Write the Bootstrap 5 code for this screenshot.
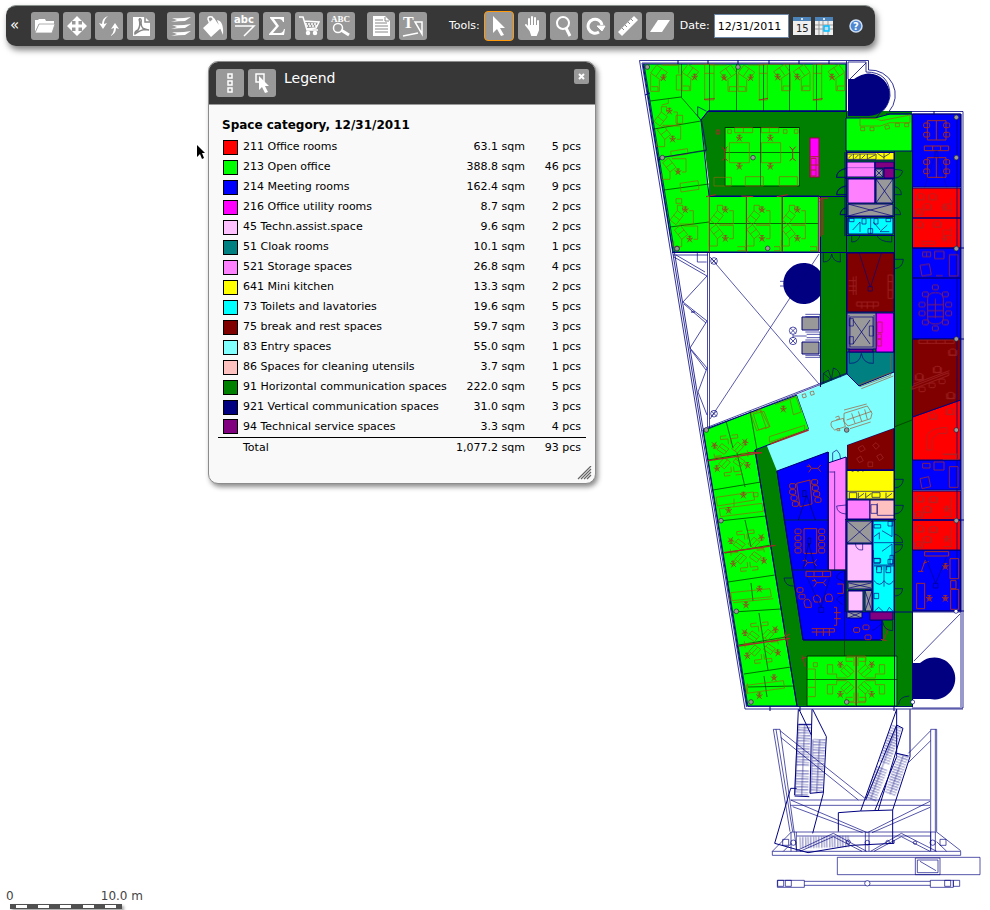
<!DOCTYPE html>
<html lang="en">
<head>
<meta charset="utf-8">
<meta name="viewport" content="width=device-width, initial-scale=1">
<title>Floor plan viewer</title>
<link rel="stylesheet" href="https://cdn.jsdelivr.net/npm/bootstrap@5.3.0/dist/css/bootstrap.min.css">
<style>
body{font-family:"DejaVu Sans",Verdana,sans-serif;font-size:11px;line-height:16px;color:#000;background:#fff}
.toolbar{background:#373737;color:#fff;border-radius:10px;border-top:1px solid #8a938d;box-shadow:2px 4px 6px rgba(0,0,0,.5);height:41px;margin:5px 0 4px 6px;padding:0 12px 0 4px}
.collapse-btn{font-size:15px;width:21px;color:#fff;padding:0 0 2px;border:0;background:none;text-align:left}
.tool{width:28px;height:28px;padding:0;border:0;border-radius:3px;background:#999;color:#fff;display:block;flex:none}
.tool svg{display:block;width:28px;height:28px}
.tool.picked{width:30px;height:30px;border:1px solid #ff9a0c;border-radius:4px}
.tool-group{margin-left:12px}
.tools-label{margin:0 4px 0 22px}
.date-label{margin:0 4px 0 6px}
.date-box{width:75px;height:24px;border:1px solid #6b86a5;padding:0 3px;font-size:11px;background:#fff;color:#000}
.small-btn{padding:0;border:0;background:none;display:block}
.small-btn svg{display:block}
.legend{left:208px;top:61px;width:388px;background:#f9f9f9;border:1px solid #8c8c8c;border-radius:10px;box-shadow:2px 3px 5px rgba(0,0,0,.45);overflow:hidden}
.legend-head{background:#373737;color:#fff;height:43px;padding:7px 6px 0 7px;border-bottom:1px solid #999}
.legend-head h1{font-size:14px;line-height:18px;font-weight:400;margin:0 0 0 4px}
.close-btn{width:15px;height:15px;padding:0;border:0;border-radius:2px;background:#999}
.legend-body{padding:10px 9px 0 9px}
.legend-body h2{font-size:12px;line-height:20px;font-weight:700;margin:0 0 2px 4px}
.legend-table{width:100%;border-collapse:collapse}
.legend-table td,.legend-table th{height:20px;padding:0;font-weight:400;white-space:nowrap;line-height:18px}
.legend-table td{text-align:right}
.legend-table .name-col{width:232px;padding-left:5px}
.legend-table .area-col{width:75px}
.legend-table .count-col{padding-right:5px}
.legend-table tfoot tr{border-top:1px solid #000}
.legend-table tfoot td,.legend-table tfoot th{height:21px}
.legend-table tfoot th{padding-left:25px}
.swatch{display:inline-block;width:15px;height:15px;border:1px solid #000;vertical-align:middle;margin-right:5px}
.grip{padding:8px 3px 3px 0}
.pointer{left:196px;top:144px}
.scale{left:6px;bottom:1px;color:#444;font-size:12px}
.scale-text{width:137px}
.scale-bar{width:112px;height:5px;margin-left:4px;background:#505050;box-shadow:2px 2px 3px rgba(0,0,0,.35);padding:1px 0}
.scale-bar i{width:11px;height:3px;background:#fff}
.plan{width:360px;height:850px;flex:none;display:block}
.wall{stroke:#000080;fill:none;stroke-width:1}
.outer{opacity:.8}
.thin{stroke:#003000;fill:none;stroke-width:1}
.faint{opacity:.7}
.room{stroke:#000080;stroke-width:1}
.f{stroke:#94640c;fill:none;stroke-width:2}
.fr{stroke:#a52a2a;fill:none;stroke-width:3}
.heavy{stroke-width:4}
.n{stroke:#000080;fill:none;stroke-width:2}
.nf{stroke:#000080;fill:none;stroke-width:1}
.frame{stroke:#000080;fill:none;stroke-width:2}
.lg{fill:#0f0}.dg{fill:#008000}.bl{fill:#00f}.rd{fill:#f00}.mg{fill:#f0f}.lp{fill:#ffc0ff}.tl{fill:#008080}.st{fill:#ff80ff}.yl{fill:#ff0}.cy{fill:#0ff}.mr{fill:#800000}.en{fill:#80ffff}.pk{fill:#ffc0c0}.nv{fill:#000080}.pu{fill:#800080}.gr{fill:#999}
</style>
</head>
<body>
<div class="d-flex flex-column vh-100 overflow-hidden position-relative">
<header class="toolbar d-flex align-items-center align-self-start flex-shrink-0" role="toolbar" aria-label="Plan tools">
 <button class="collapse-btn" type="button" aria-label="Collapse toolbar">«</button>
 <div class="d-flex gap-1">
  <button class="tool" type="button" aria-label="Open"><svg viewBox="0 0 28 28" fill="#fff"><path d="M4 20V8h3l1-1h6l1 2h8v3H8z"/><path d="M8 12h16l-3 9H4z" stroke="#999" stroke-width=".8"/></svg></button>
  <button class="tool" type="button" aria-label="Move"><svg viewBox="0 0 28 28" fill="#fff"><path d="M14 4l5 5h-3.500v3.500H19V9l5 5-5 5v-3.500h-3.500V19H19l-5 5-5-5h3.500v-3.500H9V19l-5-5 5-5v3.500h3.500V9H9z"/></svg></button>
  <button class="tool" type="button" aria-label="Refresh"><svg viewBox="0 0 28 28" fill="#fff"><path d="M13 4Q9 7 9 12l3-1-4 6-4-6 3 1q0-6 6-8z"/><path d="M15 24q4-3 4-8l-3 1 4-6 4 6-3-1q0 6-6 8z"/></svg></button>
  <button class="tool" type="button" aria-label="Export PDF"><svg viewBox="0 0 28 28"><path fill="#fff" d="M6 5h12l5 5v14H6z"/><path d="M18 5v5h5M12 7q3-1 2 4 0 7 8 7-6-2-14 4-1-2 3-4 3-5 1-11" fill="none" stroke="#888" stroke-width="1.500"/></svg></button>
 </div>
 <div class="d-flex gap-1 tool-group">
  <button class="tool" type="button" aria-label="Layers"><svg viewBox="0 0 28 28" fill="#fff"><path d="M5 6q8 1 19-1-3 2-6 4-6 0-14 1 4-1 6-2-3-1-5-2zM5 13q8 1 19-1-3 2-6 4-6 0-14 1 4-1 6-2-3-1-5-2zM5 20q8 1 19-1-3 2-6 4-6 0-14 1 4-1 6-2-3-1-5-2z"/></svg></button>
  <button class="tool" type="button" aria-label="Fill"><svg viewBox="0 0 28 28"><path fill="#fff" d="M4 16L15 6l7 10-10 9zM18 8q7 1 6 15l-3-7z"/><path d="M11 12L9 7q0-3 4-2l3 4" fill="none" stroke="#fff" stroke-width="1.500"/></svg></button>
  <button class="tool" type="button" aria-label="Text labels"><svg viewBox="0 0 28 28" fill="#fff"><text x="3" y="11" font-size="10" font-weight="700">abc</text><path d="M4 14h19L13 24" fill="none" stroke="#fff" stroke-width="1.500"/></svg></button>
  <button class="tool" type="button" aria-label="Sum"><svg viewBox="0 0 28 28" fill="#fff"><path d="M7 5h14v5h-1q-1-3-4-3h-5l5 7-6 7h7q3 0 4-4h1l-1 6H6v-1l7-8-6-8z"/></svg></button>
  <button class="tool" type="button" aria-label="Cart"><svg viewBox="0 0 28 28" fill="none" stroke="#fff" stroke-width="1.500"><path d="M4 5h4l4 13h11M9 9l15 1-3 6-10 1"/><path d="M10 12h12M11 14h11" stroke-dasharray="2 1"/><circle cx="13" cy="21" r="1.500" fill="#fff"/><circle cx="20" cy="21" r="1.500" fill="#fff"/></svg></button>
  <button class="tool" type="button" aria-label="Find text"><svg viewBox="0 0 28 28" fill="#fff"><text x="4" y="10" font-size="9" font-weight="700" font-family="Liberation Serif,serif">ABC</text><circle cx="11" cy="16" r="4.500" fill="none" stroke="#fff" stroke-width="1.500"/><path d="M14 18l8 5" stroke="#fff" stroke-width="3"/></svg></button>
 </div>
 <div class="d-flex gap-1 tool-group">
  <button class="tool" type="button" aria-label="Report"><svg viewBox="0 0 28 28"><path fill="#fff" d="M6 4h12l5 5v15H6z"/><path d="M8 8h8M8 11h12M8 14h13M8 17h13M8 20h13M18 5v4h4" stroke="#888" fill="none"/></svg></button>
  <button class="tool" type="button" aria-label="Text style"><svg viewBox="0 0 28 28" fill="#fff"><text x="4" y="16" font-size="16" font-weight="700" font-family="Liberation Serif,serif">T</text><path d="M16 10h7v12zM4 24l15-3" fill="none" stroke="#fff" stroke-width="1.500"/></svg></button>
 </div>
 <span class="tools-label">Tools:</span>
 <div class="d-flex gap-1 align-items-center">
  <button class="tool picked" type="button" aria-label="Select"><svg viewBox="0 0 28 28" fill="#fff"><path d="M8 4l12 12h-5l4 7-3 1-4-7-4 4z"/></svg></button>
  <button class="tool" type="button" aria-label="Pan"><svg viewBox="0 0 28 28" fill="none" stroke="#fff" stroke-width="2" stroke-linecap="round"><path d="M11 15V7M14 15V5M17 15V6M20 15V9M8 13l4 5"/><path d="M11 14h9v4l-2 5h-4z" fill="#fff"/></svg></button>
  <button class="tool" type="button" aria-label="Zoom"><svg viewBox="0 0 28 28" fill="none" stroke="#fff"><circle cx="13" cy="11" r="6" stroke-width="2"/><path d="M16 16l4 8" stroke-width="3"/></svg></button>
  <button class="tool" type="button" aria-label="Rotate"><svg viewBox="0 0 28 28" fill="none" stroke="#fff" stroke-width="3"><path d="M17 20a7 7 0 1 1 3-7"/><path d="M15 14h8l-3 5z" fill="#fff" stroke-width="1"/></svg></button>
  <button class="tool" type="button" aria-label="Measure"><svg viewBox="0 0 28 28"><path d="M4 20L20 4l4 4L8 24z" fill="#fff"/><path d="M8 16l2 2M11 13l2 2M14 10l2 2M17 7l2 2" stroke="#888"/></svg></button>
  <button class="tool" type="button" aria-label="Area"><svg viewBox="0 0 28 28" fill="#fff"><path d="M12 8h12l-8 12H4z"/></svg></button>
 </div>
 <label class="date-label" for="date">Date:</label>
 <input class="date-box" id="date" type="text" value="12/31/2011">
 <div class="d-flex gap-1 ms-1">
  <button class="small-btn" type="button" aria-label="Pick date"><svg width="18" height="18" viewBox="0 0 18 18"><path d="M0 0h18v18H0z" fill="#eee"/><path d="M0 0h18v4H0z" fill="#4c83b8"/><circle cx="9" cy="2" r="1" fill="#fff"/><text x="3" y="15" font-size="10" fill="#222">15</text></svg></button>
  <button class="small-btn" type="button" aria-label="Calendar"><svg width="18" height="18" viewBox="0 0 18 18"><path d="M0 0h18v18H0z" fill="#eee"/><path d="M0 8h18M0 12h18M4 4v14M8 4v14M13 4v14" stroke="#999"/><path d="M0 0h18v4H0z" fill="#4c83b8"/><circle cx="9" cy="2" r="1" fill="#fff"/><path d="M9 9h5v5H9z" fill="#bdf" stroke="#00bfff" stroke-width="1.500"/></svg></button>
 </div>
 <button class="small-btn ms-3" type="button" aria-label="Help"><svg width="14" height="14" viewBox="0 0 14 14"><circle cx="7" cy="7" r="6" fill="#4e86cf" stroke="#cfe0f5" stroke-width="1.500"/><text x="4" y="11" font-size="10" font-weight="700" fill="#fff">?</text></svg></button>
</header>

<main class="d-flex justify-content-end flex-grow-1">
<svg class="plan" viewBox="630 50 360 850" role="img" aria-label="Floor plan">
<defs>
 <g id="ch"><circle r="5"/><path d="M0-11V0L10-4M0 0L7 9M0 0L-7 9M0 0L-10-4M-6-9L6-9" stroke="#a52a2a"/></g>
 <g id="ws"><path d="M-8-27L24-5 6 19-26-3ZM7-17L-10 7M-26 0V52H0V18M-24 38H-4V50M4-27H54"/><use href="#ch" x="12" y="12"/></g>
 <g id="wd"><path d="M-22 10L0-18 18-4-4 24ZM-11-4L7 10M0-18V-34H16V-18M6 22H48V-18H36"/><use href="#ch" x="24" y="-20"/></g>
 <g id="wu"><path d="M-22-10L0 18 18 4-4-24ZM-11 4L7-10M0 18V40H-24V22M6-22H48V18H36"/><use href="#ch" x="24" y="18"/></g>
 <g id="qt"><path d="M6 24L24 6 46 26 28 44ZM15 15L37 35M28 4H58V16H86V44H70V20M6 40V66H30V54H10"/><use href="#ch" x="47" y="46"/></g>
 <g id="quad"><use href="#qt"/><use href="#qt" transform="scale(-1 1)"/><use href="#qt" transform="scale(1 -1)"/><use href="#qt" transform="scale(-1 -1)"/></g>
 <g id="qs"><path d="M4 20L20 5 40 22 24 38ZM12 12L32 30M28 2H50V10M4 34V50H26V60H8"/><use href="#ch" x="46" y="36"/></g>
 <g id="quads"><use href="#qs"/><use href="#qs" transform="scale(-1 1)"/><use href="#qs" transform="scale(1 -1)"/><use href="#qs" transform="scale(-1 -1)"/></g>
 <g id="post"><circle r="7" fill="#999" stroke="#223" stroke-width="2"/></g>
 <g id="arm"><rect x="-9" y="-9" width="18" height="18" rx="5"/><path d="M-12-6V10H12V-6"/></g>
 <g id="seat"><rect x="-9" y="-7" width="18" height="14" rx="4"/></g>
 <g id="pl"><path d="M-14-12L-6 0H14L22-10M-6 0L-14 12M14 0L22 10M-20-6H-8"/></g>
</defs>

<!-- room fills -->
<path class="dg" d="M708 111H912V707H797L755 450 768 445 820 385V196H709V183L701 120Z"/>
<path class="lg wall" d="M643 64H846V111H708L701 120 709 196H819V252H673Z"/>
<path class="lg thin" d="M725 127.500H799.500V186H725Z"/>
<rect class="mg" x="810" y="138" width="9" height="39" stroke="#a00040"/>
<path class="lg wall" d="M703 430L797 395 809 429 755 450 797 706H747Z"/>
<path class="lg thin" d="M807 656H897V706H807Z"/>
<path class="lg wall" d="M846 118H875L890 114H912V151H846Z"/>
<g class="room">
 <path class="bl" d="M912.500 114H960.500V187H912.500ZM912.500 248H960.500V278H912.500ZM912.500 278H960.500V339H912.500ZM912.500 460H960.500V490H912.500ZM912.500 550H960.500V611H912.500Z"/>
 <path class="rd" d="M912.500 188H960.500V218H912.500ZM912.500 218H960.500V248H912.500ZM912.500 417L960.500 400V460H912.500ZM912.500 491H960.500V520H912.500ZM912.500 520H960.500V550H912.500Z"/>
 <path class="mr" d="M912.500 339H960.500V400L912.500 417ZM847 253H894V312H847ZM847 445L894 428V470H847Z"/>
 <path class="en" stroke="none" d="M797 395L847 374 859 386 894 372V428L847 445V457L828 463V452L777 471 767 446 809 429Z"/>
 <path class="tl" d="M847 352H894V372L859 386 847 374Z"/>
 <path class="bl" d="M777 471L828 452V570H846V612H870V620H882V640H803L792 570Z"/>
 <path class="st" d="M828 463L846 457V570H828ZM847 162H875V177H847ZM848 179H875V203H848ZM847 500H870V519H847Z"/>
 <path class="yl" d="M847 152.500H894V160H847ZM847 470H894V499H847Z"/>
 <path class="pk" d="M870 500H894V519H870Z"/>
 <path class="cy" d="M848 218H893V234H848ZM873 521H894V612H873Z"/>
 <path class="lp" d="M847 544H872V581H847ZM848 591H863V611H848Z"/>
 <path class="pu" d="M875 162H894V168H875ZM884 168H894V178H884ZM870 612H893V620H870ZM849 349H873V352H849Z"/>
 <path class="mg" d="M876 313H893.500V352H876Z"/>
 <path class="gr" d="M876 179H893V203H876ZM848 204H893V216H848ZM875 169H883V177H875ZM847 313H876V349H847ZM802 317H819V330H802ZM802 342H819V354H802ZM847 521H872V543H847ZM848 582H872V589H848ZM865 590H872V611H865ZM847 612H862V618H847Z"/>
</g>
<path class="nv" d="M848 79H854C862 74 866 73.500 869 73.500A21 21 0 0 1 868 116H848ZM820 271V296A20.500 20.500 0 1 1 820 271ZM912 663H920A21 21 0 1 1 930 699H912Z"/>

<!-- outer walls -->
<g class="wall outer">
 <path d="M639.500 60.500H868.500V70A25 25 0 0 1 889 111.500H963V708H912M639.500 60.500L745 709H963M644 64L748 706.500H912M642 63L746.500 707M642 63H847M846.500 61V118M848 79V62H866V72Q890 72 890 96 888 108 880 113L876 118M850 79L866 63M886 114H961V612H912M957 114V611M961 114V707"/>
</g>
<g class="wall">
 <path d="M672 252.500H820"/><path class="faint" d="M673 255H708M707.500 253V427M709.500 253V427M703 431L847 374M703 429L847 373"/>
 <path d="M820.500 196V387M846.500 150V374M894.500 151V707M912.500 151V707M709 196.500H847M708 111.500H846M820 252.500H894M847 470.500H894M828.500 452V570M797 706L755 450M777 471L803 640M803 640H882V620M844.500 570V640"/>
 <path d="M845 178.500H895M845 216.500H895M846 235.500H895M845 152V236M845 519.500H896M846 520V612M872.500 520V612M875 162V203M847 500V520M894 612H912M848 590.500H872"/>
 <path class="faint" d="M674 257L707 276 683 302 707 321 690 348 707 368 698 392 707 415M676 255L705 272M684 304L706 323M691 350L706 370"/>
 <path d="M710 257L819 384M819 254L710 419" opacity=".65"/>
 <path d="M914 661L960 614" opacity=".7"/>
 <path class="faint" d="M876 179L893 203M893 179L876 203M848 204L893 216M893 204L848 216M875 169L883 177M883 169L875 177M847 521L872 543M872 521L847 543M849 583L871 588M871 583L849 588M865 591L872 611M872 591L865 611M848 612L862 618M862 612L848 618M850 317H873V347H850ZM853 320L870 344M870 320L853 344M849 315V349M874 315V349"/>
 <path d="M645 95L650 93M664 158L658 160M691 312H695M912 248H964M912 339H964M912 520H964M912 611H964M678 60V64M708 60V64M738 60V64M769 60V64M799 60V64M829 60V64M934 111V115M800 706V711M770 706V711M894 706V711"/>
</g>
<g class="thin faint">
 <path d="M681.500 64V97M709.500 64V111M736.500 64V111M763.500 64V111M789.500 64V111M816.500 64V111M650 101L681 97 701 120M654 129L701 121M659 158L706 150M664 190L709 184M670 227L709 222M746.500 196V252M782.500 196V252M709 223.500H819M760.500 128V186M725 152.500H799"/>
 <path d="M726 421L733 448M750 411L757 450M708 460L755 452M713 490L761 482M719 521L766 516M725 553L771 545M728 582L775 575M733 612L781 609M739 645L786 637M744 674L791 667M748 687L794 686M737 453L745 487M745 520L751 547M751 583L753 601M759 613L768 670M764 676L767 697M807 679.500H897M856.500 656V706M844.500 640V656M783 520H828M792 570H846M894 427L912 420"/>
</g>

<!-- furniture, north wing -->
<svg x="630" y="50" width="220" height="210" viewBox="0 0 660 630" overflow="visible">
 <g class="f">
  <use href="#ws" x="88" y="72"/><use href="#ws" x="182" y="70"/><use href="#ws" x="350" y="72"/>
  <use href="#ws" transform="matrix(-1 0 0 1 294 72)"/><use href="#ws" transform="matrix(-1 0 0 1 455 70)"/><use href="#ws" transform="matrix(-1 0 0 1 514 70)"/><use href="#ws" transform="matrix(-1 0 0 1 618 70)"/>
  <use href="#wd" x="94" y="204"/><use href="#wu" x="104" y="250"/><use href="#wu" x="120" y="348"/><use href="#wd" x="142" y="500"/><use href="#wu" x="155" y="550"/>
  <path d="M224 43H252V150H224ZM388 43H412V150H388ZM550 43H575V150H550ZM139 75H154V120H139ZM98 45H146V70M224 70H252M388 70H412M550 70H575M138 196H158V220H138ZM122 304L172 296 174 312 124 320ZM150 400L204 392 207 418 153 426ZM252 382H304V408H252ZM346 380H400V408H346ZM448 380H502V408H448ZM138 446H155V460H138ZM314 233H368V248H314ZM394 233H446V248H394ZM340 233V248M418 233V248M95 165L115 160V147"/>
  <path d="M298 278H358V338H298ZM394 278H452V338H394ZM293 239h11v11h-11zM460 239h11v11h-11zM493 239h11v11h-11z"/>
  <use href="#ch" x="328" y="265"/><use href="#ch" x="421" y="265"/><use href="#ch" x="328" y="350"/><use href="#ch" x="421" y="350"/>
  <use href="#wd" x="262" y="500"/><use href="#wd" x="372" y="500"/><use href="#wd" x="478" y="500"/>
  <use href="#wu" x="262" y="548"/><use href="#wu" x="372" y="548"/><use href="#wu" x="478" y="548"/>
  <path d="M322 590H346V602H322M432 590H450V602H432M540 590H560V602H540"/>
 </g>
 <g class="fr"><path d="M222 148L254 146M386 150L414 145M548 150L578 146M238 440V607M349 440V607M456 440V607M228 440L258 434M334 438L370 440M440 440L474 434M565 440V607M572 446V560M565 445H594M569 455L578 445V555M259 240h10v12h-10zM275 290L284 300H290M284 300V325L275 332M292 290L284 300M284 325L293 332M479 290L488 300 497 290M488 300V325L479 332M488 325L497 332"/><path d="M541 320H568M541 345H568M543 325H558V378H543ZM543 360H558"/></g>
 <g class="n"><path d="M212 212L236 182H650M215 212L230 302M84 324L228 302M212 210L203 198V170L230 184M648 355Q620 360 619 382H648M648 408Q620 415 620 434H648M648 474Q632 478 631 494H648"/></g>
 <use href="#post" x="52" y="51"/><use href="#post" x="324" y="51"/><use href="#post" x="97" y="323"/><use href="#post" x="141" y="595"/><use href="#post" x="413" y="595"/><use href="#post" x="369" y="323" />
</svg>

<!-- furniture and doors, upper core -->
<svg x="800" y="50" width="180" height="210" viewBox="0 0 540 630" overflow="visible">
 <g class="f"><path d="M180 206H228L244 212 330 195V218H270L240 228H180ZM182 232h12v10h-12zM210 232h12v10h-12zM254 228l12-3 3 10-12 3zM286 220h12v10h-12zM314 220h12v10h-12z"/></g>
 <g class="fr"><path d="M382 212H438V270H382ZM409 212V270M382 323H438V382H382ZM409 323V382M373 288H446V302H373ZM398 288V302M422 288V302"/>
 <use href="#seat" x="380" y="226"/><use href="#seat" x="380" y="254"/><use href="#seat" x="440" y="226"/><use href="#seat" x="440" y="254"/><use href="#seat" x="380" y="336"/><use href="#seat" x="380" y="364"/><use href="#seat" x="440" y="336"/><use href="#seat" x="440" y="364"/>
 <g opacity=".65"><use href="#arm" x="362" y="440"/><use href="#arm" x="398" y="440"/><use href="#arm" x="382" y="470"/><use href="#arm" x="356" y="486"/><use href="#arm" x="358" y="524"/><use href="#arm" x="412" y="522"/><path d="M454 445V490M454 462H430V480H454M454 530V580M454 540H430V556H454M366 574H404V584H366Z"/><use href="#ch" x="434" y="474"/><use href="#ch" x="434" y="568"/></g></g>
 <g class="n"><path d="M140 312H228V328H140ZM160 312V328M180 312V328M202 312V328M145 325L155 315M165 325L175 315M185 325L195 315M205 325L225 315M232 310L250 322 270 310M252 310V328M137 356Q110 362 110 382H137M137 408Q110 412 110 434H137M137 474Q122 476 120 494H137M284 358Q308 360 308 364Q302 384 284 384M284 410Q304 414 304 434H284M284 472Q300 476 302 494H284M155 556V576Q175 576 180 556M275 556V576Q240 576 230 556M145 503V552M212 503V552M158 540L180 516V546M240 540L220 516M268 545H240L262 525M148 505h14v10h-14zM258 505h14v10h-14zM186 506h12v16h-12zM222 506h12v16h-12zM204 536h14v14h-14z"/></g>
 <path class="nf" d="M409 303L374 412M409 303L440 412M404 303H414V320H404ZM140 353H225"/>
 <use href="#post" x="469" y="202"/><use href="#post" x="469" y="323"/><use href="#post" x="469" y="595"/>
</svg>

<!-- middle section -->
<svg x="660" y="240" width="320" height="220" viewBox="0 0 960 660" overflow="visible">
 <g class="fr" opacity=".75"><path d="M788 36h24v14h-24zM824 34h28v22h-28zM868 44h26v64h-26zM780 76l28-4 6 32-28 4zM800 50V38M828 107H848M803 176Q803 158 826 158 850 158 850 176V234Q850 252 826 252 803 252 803 234ZM803 194H850M803 212H850M803 230H850M826 176V234"/>
 <use href="#seat" x="826" y="142"/><use href="#seat" x="796" y="163"/><use href="#seat" x="856" y="163"/><use href="#seat" x="786" y="194"/><use href="#seat" x="866" y="194"/><use href="#seat" x="786" y="220"/><use href="#seat" x="866" y="220"/><use href="#seat" x="796" y="247"/><use href="#seat" x="856" y="247"/><use href="#seat" x="826" y="265"/>
 <path d="M776 300H882V310H776ZM802 300V310M828 300V310M855 300V310M756 440L866 398V406L756 448ZM760 432L868 392"/><use href="#arm" x="778" y="410"/><use href="#arm" x="832" y="388"/><use href="#arm" x="878" y="336"/><use href="#arm" x="872" y="466"/><use href="#seat" x="786" y="448"/><use href="#seat" x="816" y="436"/><use href="#seat" x="846" y="424"/><use href="#arm" x="818" y="528"/><use href="#arm" x="870" y="514"/>
 <path d="M800 630V590Q806 564 860 562V580H836L816 596V630ZM848 642H896V658H848M580 110V165M588 108V165M566 122H588M566 138H588M566 152H588M590 186H655V198H590ZM605 186V206M622 186V206M640 186V206M684 105H698V175H684ZM684 125H698M684 150H698M652 246h14v32h-14zM652 282h12v14h-12zM652 298h12v20h-12z"/></g>
 <g class="f"><path stroke="#a0522d" d="M552 520L622 498 636 520 632 536 564 558 552 545ZM560 540L635 514M552 510L620 492M570 566L632 546M575 520L585 550M595 514L605 544M614 508L622 538M526 532l10-4 3 8-10 3M515 545L550 535 556 560 524 570Q508 558 515 545M530 566l8 0 2 6-10 0M426 464l10-3 3 10-10 3zM450 456l10-3 3 10-10 3zM596 434L692 398V406L600 440M604 446L700 408M692 342V390"/>
 <path d="M272 520L300 510 318 562 290 572ZM288 516L300 505 328 560 316 566M345 494L408 470 424 516 400 524 390 478M328 590L434 556V572L328 606Z"/><use href="#ch" x="370" y="508"/></g>
 <path class="fr heavy" d="M330 612L446 570M264 638H306"/>
 <g class="n"><path d="M112 38V66H140M490 40V66Q512 66 515 42M541 66V40M515 42Q520 66 541 66M704 58H730Q728 84 704 86M568 336V370Q600 372 604 340 610 372 640 370V336M490 430V400L515 420 505 390 490 400M541 412Q540 390 520 384L515 415M598 40L630 140M664 40L632 140M624 140h13v13h-13zM436 223H480V230H436M436 346H480V352H436M436 276H480V300H436M400 288H440M440 283H480M440 293H480M568 236h12v22h-12zM568 290h12v22h-12zM628 258h12v30h-12zM360 124H372M360 138H372"/><circle cx="399" cy="272" r="11"/><circle cx="399" cy="303" r="11"/><path d="M391 264l16 16M407 264l-16 16M391 295l16 16M407 295l-16 16M399 283V293"/><circle cx="162" cy="63" r="10"/><path d="M154 55l16 16M170 55l-16 16"/><circle cx="162" cy="521" r="10"/><path d="M154 513l16 16M170 513l-16 16"/></g>
 <use href="#post" x="139" y="570"/><use href="#post" x="560" y="570"/><use href="#post" x="889" y="26"/><use href="#post" x="889" y="297"/><use href="#post" x="889" y="570"/><use href="#post" x="51" y="26"/>
</svg>

<!-- lower west offices and core -->
<svg x="690" y="400" width="290" height="170" viewBox="0 0 870 510" overflow="visible">
 <g class="f">
  <use href="#quads" transform="translate(123 166) rotate(-6)"/>
  <use href="#quads" transform="translate(172 452) rotate(-6)"/>
  <use href="#quads" transform="translate(214 728) rotate(-6)"/>
  <path d="M78 292L190 276 194 300 82 318ZM88 326L216 310 220 334 92 350ZM190 278h14v12h-14zM132 296V320M190 42L222 34 240 80 206 90ZM122 578L240 566 244 590 126 602ZM130 608L250 596M120 602V580M168 856L280 842 284 864 170 880ZM172 850V880"/>
  <use href="#ch" x="160" y="286"/><use href="#ch" x="116" y="332"/><use href="#ch" x="208" y="568"/><use href="#ch" x="168" y="616"/><use href="#ch" x="252" y="834"/><use href="#ch" x="208" y="888"/>
  <path d="M504 144l14-8 8 12-14 8zM548 136l10-8 10 10-10 10zM560 168l12-6 8 12-12 8zM500 176l12-8 8 14-12 6zM534 186h14v14h-14z" stroke="#a52a2a"/>
 </g>
 <path class="fr heavy" d="M55 182L216 158M102 458L256 436M146 738L300 715"/>
 <g class="fr">
  <path d="M320 250L360 240 366 312 330 320ZM342 386H380V460H342Z"/>
  <use href="#seat" x="308" y="258"/><use href="#seat" x="308" y="276"/><use href="#seat" x="312" y="294"/><use href="#seat" x="316" y="312"/><use href="#seat" x="374" y="246"/><use href="#seat" x="376" y="264"/><use href="#seat" x="380" y="282"/><use href="#seat" x="384" y="300"/>
  <use href="#seat" x="324" y="394"/><use href="#seat" x="324" y="414"/><use href="#seat" x="324" y="434"/><use href="#seat" x="324" y="452"/><use href="#seat" x="395" y="394"/><use href="#seat" x="395" y="414"/><use href="#seat" x="395" y="434"/><use href="#seat" x="395" y="452"/>
  <use href="#pl" x="370" y="205"/><use href="#pl" x="358" y="488"/>
  <g opacity=".8"><path d="M698 190h22v14h-22zM732 186h30v24h-30zM778 200h26v62h-26zM690 236l26-6 6 30-26 6zM760 164h40v12"/><use href="#arm" x="690" y="296"/><use href="#arm" x="730" y="298"/><use href="#arm" x="712" y="328"/><use href="#arm" x="686" y="344"/><use href="#arm" x="690" y="386"/><use href="#arm" x="730" y="388"/><use href="#arm" x="712" y="418"/><use href="#arm" x="686" y="434"/><use href="#ch" x="770" y="328"/><use href="#ch" x="770" y="418"/><path d="M784 290V350H760M784 380V440H760"/></g>
 </g>
 <g class="n"><path d="M428 184V158L440 150Q452 160 452 178M468 315Q440 318 440 318 440 340 468 342M614 238H640Q638 262 614 264M614 316H640Q638 340 614 342M614 402Q638 410 638 428H614M614 434H638Q636 454 614 458M470 274H612M478 278h22v18h-22zM505 278V296M527 278V296M546 278h24v14h-24zM588 278V296M506 292L522 280M528 292L544 280M590 292L606 280M480 210l8 4 8-4 8 4 8-4 8 4M543 314h18v26h-18zM562 310V346H612M434 214V510M418 216H434M496 430Q498 452 518 450V430M552 428H612M552 495H612M552 374h20v10h-20zM552 410l16-12 0 20M576 392L606 410V364M594 364h14v14h-14zM576 454L606 432V476M552 476h20v12h-20zM594 478h14v14h-14zM560 500V510M575 500V510M590 500V510"/><path d="M350 286L325 360M350 286L376 360M338 272h10v18h-10zM356 430L340 506M356 430L376 506M354 414h8v18h-8z" stroke="#000050"/></g>
 <use href="#post" x="93" y="362"/><use href="#post" x="799" y="362"/>
</svg>

<!-- lower end of the building -->
<svg x="690" y="550" width="290" height="170" viewBox="0 0 870 510" overflow="visible">
 <g class="fr"><use href="#pl" x="386" y="98"/><path d="M348 64H422V80H348ZM372 64V80M398 64V80M442 102H460V130H442M432 172H440V226H432M432 188H452M432 206H452M365 236H433V246H365M380 236V258M400 236V258M418 236V258M342 158q0-12 14-10 10 8 8 24h-18zM370 146q0-12 14-10 10 8 8 20h-18zM406 140q4-12 18-6 6 8 2 20h-18z"/><use href="#seat" x="330" y="120"/><use href="#seat" x="336" y="140"/><use href="#seat" x="500" y="240"/><use href="#seat" x="528" y="232"/><use href="#seat" x="534" y="262"/>
 <path d="M706 30L694 64M684 64H700M700 40L716 34M780 26H806V86H780ZM782 92H798V116H782ZM680 100H704V176H680ZM782 118H806V178H782ZM704 5H776V18H704Z"/><use href="#ch" x="766" y="50"/><use href="#ch" x="718" y="146"/><use href="#ch" x="766" y="146"/><path d="M285 244L294 290M280 262L300 252M336 316L346 350M334 326L350 322M586 230L594 240 580 270M572 268L590 272"/></g>
 <g class="f"><use href="#quad" transform="translate(498 388)"/><path d="M352 357H376V440M352 440H376M352 412H376M370 338h12v12h-12zM470 318H526V345M470 458H526V430"/></g>
 <path class="fr heavy" d="M498 318V466"/>
 <g class="n"><path d="M308 84H282Q286 110 312 108M460 65Q440 70 440 84L460 94M460 136Q440 140 440 150L458 164M614 116H638Q636 138 614 138M546 240Q550 244 576 220M608 212V242Q582 242 578 214M626 464Q626 440 658 438M386 172h15v15h-15zM393 172L350 80M393 172L420 80M737 100L706 20M737 100L770 20M730 100h14v14h-14zM552 48H612M560 50h14v18h-14zM588 50h14v18h-14zM582 50V110M552 92Q570 114 582 92 598 114 610 92M552 130h14v16h-14zM552 185L566 172 580 185M590 185L598 172 610 185M550 0V25H570V40H552M600 16h10v26h-10z"/></g>
 <use href="#post" x="139" y="184"/><use href="#post" x="183" y="456"/><use href="#post" x="470" y="456"/><g fill="#fff" stroke="#000080" stroke-width="2"><circle cx="798" cy="184" r="6"/><circle cx="668" cy="456" r="6"/></g>
</svg>

<!-- stairs and supporting frame -->
<svg x="750" y="700" width="240" height="200" viewBox="0 0 720 600" overflow="visible">
 <g class="frame">
  <path stroke-width="3" d="M145 28L134 285M186 28L180 280M188 28L229 110 220 280 188 400M147 28L184 105M440 28L332 333M480 28V170L428 330M440 28V170M145 73H185M347 300L440 75 459 85 385 330M375 330L440 170M440 160L476 168M332 333L428 330V430M332 333L265 338V395M134 288L178 290M180 280L220 276"/>
  <path d="M70 88H90L140 450M70 88L120 395M78 88L128 395M90 92L345 295M92 112L325 300M542 88H560V395M542 88V452M556 88V395M542 92L475 160M542 122L475 188M122 300H540M122 316H540M122 300L352 398 540 304M128 320L338 398M540 322L366 398"/>
  <path stroke-width="3" d="M122 265H140M122 265L74 430 174 458 306 436 432 430V420"/>
  <path d="M67 454H632V466H67ZM67 454L124 396H560L632 452M140 408H542M123 396V454M139 396V454M346 396V454M357 396V454M542 396V454M556 396V454M140 452L250 400 350 454M150 454L250 410 336 454M362 454L454 400 560 454M372 454L454 410 540 454M100 454L124 430M590 454L560 425M98 418h18v18h-18zM570 418h18v18h-18z"/>
  <circle cx="130" cy="428" r="8"/><circle cx="352" cy="428" r="7"/><circle cx="548" cy="428" r="8"/><circle cx="295" cy="426" r="6"/><circle cx="413" cy="426" r="5"/><circle cx="495" cy="428" r="5"/>
  <path d="M262 472H690V524H262ZM496 474H570V524H496ZM502 480H564V518H502ZM510 484L558 512M82 541H163V562H82ZM83 541H101V559H83ZM106 541H124V559H106ZM163 544H541M163 556H541M541 541H610V562H541ZM584 541H602V559H584ZM610 541H629V559H610Z"/><circle cx="352" cy="550" r="8" fill="#fff"/>
 </g>
 <g fill="none" stroke="#000080" opacity=".8">
  <path stroke-width="38" stroke-dasharray="2 6" d="M164 74L158 196M158 212L155 288"/>
  <path stroke-width="36" stroke-dasharray="2 6" d="M209 118L200 278"/>
  <path stroke-width="34" stroke-dasharray="2 6" d="M440 80L402 188M396 205L362 298"/>
  <path stroke-width="34" stroke-dasharray="2 6" d="M460 166L420 282"/>
  <path stroke-width="34" stroke-dasharray="2 6" d="M150 428L302 424"/>
  <path stroke-width="2" d="M164 74L155 288M209 118L200 278M440 80L362 298M460 166L420 282M145 73L134 288M189 118L182 278"/>
 </g>
</svg>
</svg>
</main>

<section class="legend position-absolute" aria-label="Legend">
 <div class="legend-head d-flex align-items-start gap-1">
  <button class="tool" type="button" aria-label="List layout"><svg viewBox="0 0 28 28" fill="none" stroke="#fff" stroke-width="1.500"><path d="M12 5h4v4h-4zM12 12h4v4h-4zM12 19h4v4h-4z"/></svg></button>
  <button class="tool" type="button" aria-label="Select category"><svg viewBox="0 0 28 28"><path d="M8 5h8v8H8z" fill="none" stroke="#fff" stroke-width="1.500"/><path d="M11 7l10 10h-4l3 6-3 1-3-6-3 3z" fill="#fff"/></svg></button>
  <h1>Legend</h1>
  <button class="close-btn ms-auto" type="button" aria-label="Close"><svg class="d-block" width="15" height="15" viewBox="0 0 15 15"><path d="M5 5l5 5M10 5l-5 5" stroke="#fff" stroke-width="2"/></svg></button>
 </div>
 <div class="legend-body">
  <h2>Space category, 12/31/2011</h2>
  <table class="legend-table">
   <tbody>
    <tr><th scope="row" class="name-col"><span class="swatch" style="background:#f00"></span>211 Office rooms</th><td class="area-col">63.1 sqm</td><td class="count-col">5 pcs</td></tr>
    <tr><th scope="row" class="name-col"><span class="swatch" style="background:#0f0"></span>213 Open office</th><td>388.8 sqm</td><td class="count-col">46 pcs</td></tr>
    <tr><th scope="row" class="name-col"><span class="swatch" style="background:#00f"></span>214 Meeting rooms</th><td>162.4 sqm</td><td class="count-col">9 pcs</td></tr>
    <tr><th scope="row" class="name-col"><span class="swatch" style="background:#f0f"></span>216 Office utility rooms</th><td>8.7 sqm</td><td class="count-col">2 pcs</td></tr>
    <tr><th scope="row" class="name-col"><span class="swatch" style="background:#ffc0ff"></span>45 Techn.assist.space</th><td>9.6 sqm</td><td class="count-col">2 pcs</td></tr>
    <tr><th scope="row" class="name-col"><span class="swatch" style="background:#008080"></span>51 Cloak rooms</th><td>10.1 sqm</td><td class="count-col">1 pcs</td></tr>
    <tr><th scope="row" class="name-col"><span class="swatch" style="background:#ff80ff"></span>521 Storage spaces</th><td>26.8 sqm</td><td class="count-col">4 pcs</td></tr>
    <tr><th scope="row" class="name-col"><span class="swatch" style="background:#ff0"></span>641 Mini kitchen</th><td>13.3 sqm</td><td class="count-col">2 pcs</td></tr>
    <tr><th scope="row" class="name-col"><span class="swatch" style="background:#0ff"></span>73 Toilets and lavatories</th><td>19.6 sqm</td><td class="count-col">5 pcs</td></tr>
    <tr><th scope="row" class="name-col"><span class="swatch" style="background:#800000"></span>75 break and rest spaces</th><td>59.7 sqm</td><td class="count-col">3 pcs</td></tr>
    <tr><th scope="row" class="name-col"><span class="swatch" style="background:#80ffff"></span>83 Entry spaces</th><td>55.0 sqm</td><td class="count-col">1 pcs</td></tr>
    <tr><th scope="row" class="name-col"><span class="swatch" style="background:#ffc0c0"></span>86 Spaces for cleaning utensils</th><td>3.7 sqm</td><td class="count-col">1 pcs</td></tr>
    <tr><th scope="row" class="name-col"><span class="swatch" style="background:#008000"></span>91 Horizontal communication spaces</th><td>222.0 sqm</td><td class="count-col">5 pcs</td></tr>
    <tr><th scope="row" class="name-col"><span class="swatch" style="background:#000080"></span>921 Vertical communication spaces</th><td>31.0 sqm</td><td class="count-col">3 pcs</td></tr>
    <tr><th scope="row" class="name-col"><span class="swatch" style="background:#800080"></span>94 Technical service spaces</th><td>3.3 sqm</td><td class="count-col">4 pcs</td></tr>
   </tbody>
   <tfoot><tr><th scope="row">Total</th><td>1,077.2 sqm</td><td class="count-col">93 pcs</td></tr></tfoot>
  </table>
 </div>
 <div class="grip d-flex justify-content-end"><svg width="15" height="14" viewBox="0 0 15 14"><path d="M1 13L14 0M4 13l10-10M7 13l7-7M10 13l4-4" stroke="#666" stroke-width="1.200"/></svg></div>
</section>

<svg class="pointer position-absolute" width="10" height="16" viewBox="0 0 10 16"><path d="M1 1v12l3-3 2 5 2-1-2-5h3z"/></svg>

<div class="scale position-absolute">
 <div class="scale-text d-flex justify-content-between"><span>0</span><span>10.0 m</span></div>
 <div class="scale-bar d-flex justify-content-around"><i></i><i></i><i></i><i></i><i></i></div>
</div>
</div>
<script src="https://cdn.jsdelivr.net/npm/bootstrap@5.3.0/dist/js/bootstrap.bundle.min.js"></script>
</body>
</html>
